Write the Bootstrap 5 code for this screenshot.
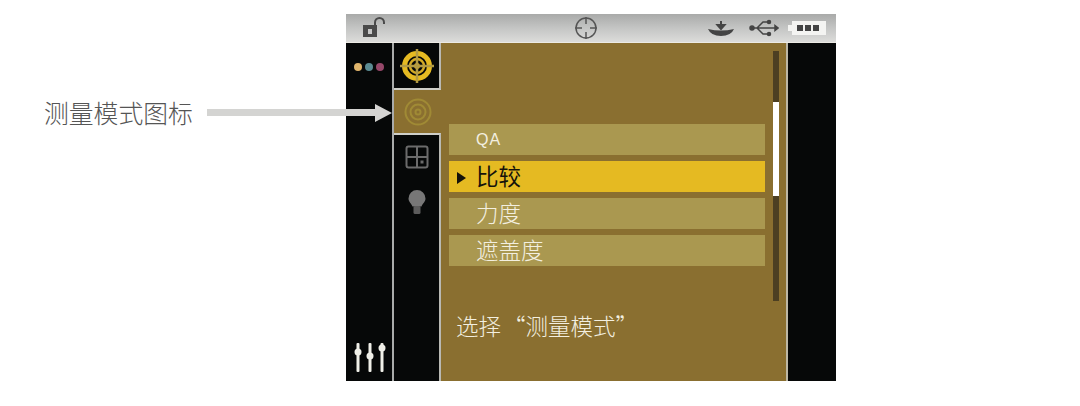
<!DOCTYPE html>
<html lang="zh-CN">
<head>
    <meta charset="UTF-8">
    <meta name="viewport" content="width=device-width, initial-scale=1.0">
    <title>测量模式图标</title>
    <link href="https://cdn.jsdelivr.net/npm/bootstrap@5.3.3/dist/css/bootstrap.min.css" rel="stylesheet">
    <style>
        body{
            background: #fff;
            font-family: "Noto Sans CJK SC", "Liberation Sans", sans-serif;
            overflow: hidden;
        }
        .page-wrap{ position: relative; height: 406px; padding: 14px 0 0 346px; }
        .device{ width: 490px; height: 367px; background: #060808; }
        .top-bar{
            height: 29px;
            padding: 0 10px 0 14px;
            background: linear-gradient(#a9aaa9, #c4c5c4 50%, #dcdcda);
            border-bottom: 1px solid #eceae4;
        }
        .center-icon{ margin-left: 188px; margin-right: auto; }
        .usb-icon{ margin-left: 14px; }
        .batt-icon{ margin-left: 9px; }
        .main-area{ height: 338px; }
        .side-left{ width: 46px; border-right: 2px solid #a9abaa; padding: 20px 0 9px; box-sizing: content-box; }
        .dots-row{ gap: 3px; }
        .dot-swatch{ width: 8px; height: 8px; border-radius: 50%; }
        .dot-a{ background: #e0b56c; }
        .dot-b{ background: #5b8b92; }
        .dot-c{ background: #96486a; }
        .side-tabs{ width: 47px; }
        .tab-top{ height: 47px; border-right: 2px solid #b9b9b4; border-bottom: 2px solid #cfcfc9; }
        .tab-active{ height: 43px; background: #8a6f30; }
        .tab-rest{ flex: 1; border-top: 2px solid #cfcfc9; border-right: 2px solid #b9b9b4; padding-top: 10px; gap: 21px; }
        .content-pane{ width: 347px; background: #8a6f30; border-right: 2px solid #bdb8a6; }
        .menu-col{ width: 316px; margin: 81px 0 0 8px; gap: 6px; }
        .menu-row{
            height: 31px;
            padding-left: 27px;
            background: #aa9850;
            color: #f3efe0;
            font-size: 22.5px;
            font-weight: 300;
            line-height: 29px;
            position: relative;
        }
        .menu-row.qa-row{ font-family: "Liberation Sans", sans-serif; font-size: 16px; letter-spacing: 1px; line-height: 31px; }
        .menu-row.sel-row{ background: #e5ba22; color: #15120a; font-weight: 400; }
        .sel-mark{
            position: absolute; left: 8px; top: 11px;
            border-left: 9px solid #15120a;
            border-top: 6.5px solid transparent;
            border-bottom: 6.5px solid transparent;
        }
        .hint-text{ margin: 43px 0 0 15px; color: #f3efe0; font-size: 22.5px; font-weight: 300; line-height: 32px; white-space: nowrap; word-spacing: -3px; }
        .scroll-track{ width: 6px; height: 250px; margin: 8px 0 0 8px; background: #4c3f22; padding-top: 51px; }
        .scroll-thumb{ height: 94px; background: #fff; }
        .side-right{ flex: 1; }
        .note-label{
            position: absolute; left: 44px; top: 97px;
            color: #555; font-size: 24.8px; line-height: 30px;
            font-weight: 300;
            white-space: nowrap;
        }
        .note-arrow{ position: absolute; left: 207px; top: 101px; }
    </style>
</head>
<body>
    <div class="page-wrap">
        <div class="device d-flex flex-column">
            <div class="top-bar d-flex align-items-center">
                <svg width="26" height="22" viewBox="0 0 26 22">
                    <path d="M15 9V5.500a4.500 4.500 0 0 1 9 0V7" fill="none" stroke="#4a4a4a" stroke-width="2"/>
                    <rect x="3" y="8" width="14" height="12" fill="#4a4a4a"/>
                    <rect x="8" y="12" width="4" height="5" fill="#c8c8c8"/>
                </svg>
                <svg class="center-icon" width="24" height="24" viewBox="0 0 24 24" fill="none" stroke="#555" stroke-width="1.500">
                    <circle cx="12" cy="12" r="10"/>
                    <path d="M12 1v7M12 16v7M1 12h7M16 12h7"/>
                </svg>
                <svg width="28" height="18" viewBox="0 0 28 18">
                    <path d="M1 10q13 3 26 0q-3 7-13 7T1 10z" fill="#444"/>
                    <path d="M14 2v7M10.500 6l3.500 4 3.500-4z" fill="#444" stroke="#444" stroke-width="2"/>
                </svg>
                <svg class="usb-icon" width="30" height="18" viewBox="0 0 30 18" fill="none" stroke="#444" stroke-width="1.500">
                    <path d="M2 9h26M8 9l6-6h5M8 9l6 6h5"/>
                    <circle cx="3" cy="9" r="2" fill="#444"/>
                    <circle cx="20" cy="3" r="1.500" fill="#444"/>
                    <circle cx="20" cy="15" r="1.500" fill="#444"/>
                    <path d="M26 6.500l3 2.500-3 2.500z" fill="#444"/>
                </svg>
                <svg class="batt-icon" width="38" height="14" viewBox="0 0 38 14">
                    <path d="M4 0h34v14H4v-4H0V4h4z" fill="#f4f4f2"/>
                    <rect x="9" y="4" width="6" height="6" fill="#444"/>
                    <rect x="17" y="4" width="6" height="6" fill="#444"/>
                    <rect x="25" y="4" width="6" height="6" fill="#444"/>
                </svg>
            </div>
            <div class="main-area d-flex">
                <div class="side-left d-flex flex-column justify-content-between align-items-center">
                    <div class="dots-row d-flex">
                        <span class="dot-swatch dot-a"></span>
                        <span class="dot-swatch dot-b"></span>
                        <span class="dot-swatch dot-c"></span>
                    </div>
                    <svg width="36" height="30" viewBox="0 0 36 30" fill="#efefe8">
                        <rect x="5.500" y="1" width="3" height="29" rx="1"/><circle cx="7" cy="10" r="3.500"/>
                        <rect x="17.500" y="1" width="3" height="29" rx="1"/><circle cx="19" cy="14" r="3.500"/>
                        <rect x="29.500" y="1" width="3" height="29" rx="1"/><circle cx="31" cy="6" r="3.500"/>
                    </svg>
                </div>
                <div class="side-tabs d-flex flex-column">
                    <div class="tab-top d-flex align-items-center justify-content-center">
                        <svg width="36" height="36" viewBox="0 0 36 36" fill="none">
                            <circle cx="18" cy="18" r="12.500" stroke="#e5ba22" stroke-width="5"/>
                            <circle cx="18" cy="18" r="7" stroke="#d3aa25" stroke-width="2.500"/>
                            <circle cx="18" cy="18" r="3" fill="#c9a327"/>
                            <path d="M18 1v34M1 18h34" stroke="#b39b44" stroke-width="2.500"/>
                        </svg>
                    </div>
                    <div class="tab-active d-flex align-items-center justify-content-center">
                        <svg width="28" height="28" viewBox="0 0 28 28" fill="none" stroke="#a08a35" stroke-width="2">
                            <circle cx="14" cy="14" r="12.500"/>
                            <circle cx="14" cy="14" r="7.500"/>
                            <circle cx="14" cy="14" r="2.500"/>
                        </svg>
                    </div>
                    <div class="tab-rest d-flex flex-column align-items-center">
                        <svg width="24" height="24" viewBox="0 0 24 24" fill="none" stroke="#6b6b6b" stroke-width="2">
                            <rect x="1.500" y="1.500" width="21" height="21" rx="2"/>
                            <path d="M12 2v20M2 12h20"/>
                            <rect x="15.500" y="15.500" width="3" height="3" fill="#6b6b6b" stroke="none"/>
                        </svg>
                        <svg width="18" height="24" viewBox="0 0 18 24" fill="#777">
                            <path d="M9 0a8.500 8.500 0 0 1 8.500 8.500c0 3.500-3 5-4 8h-9c-1-3-4-4.500-4-8A8.500 8.500 0 0 1 9 0z"/>
                            <rect x="5.500" y="16" width="7" height="8" rx="1.500" fill="#5c5c5c"/>
                        </svg>
                    </div>
                </div>
                <div class="content-pane d-flex">
                    <div>
                        <div class="menu-col d-flex flex-column">
                            <div class="menu-row qa-row">QA</div>
                            <div class="menu-row sel-row"><span class="sel-mark"></span>比较</div>
                            <div class="menu-row">力度</div>
                            <div class="menu-row">遮盖度</div>
                        </div>
                        <div class="hint-text">选择 “测量模式”</div>
                    </div>
                    <div class="scroll-track"><div class="scroll-thumb"></div></div>
                </div>
                <div class="side-right"></div>
            </div>
        </div>
        <div class="note-label">测量模式图标</div>
        <svg class="note-arrow" width="186" height="24" viewBox="0 0 186 24">
            <path d="M0 8h168V3l17 9-17 9v-6H0z" fill="#d4d4d2"/>
        </svg>
    </div>
    <script src="https://cdn.jsdelivr.net/npm/bootstrap@5.3.3/dist/js/bootstrap.bundle.min.js"></script>
</body>
</html>
